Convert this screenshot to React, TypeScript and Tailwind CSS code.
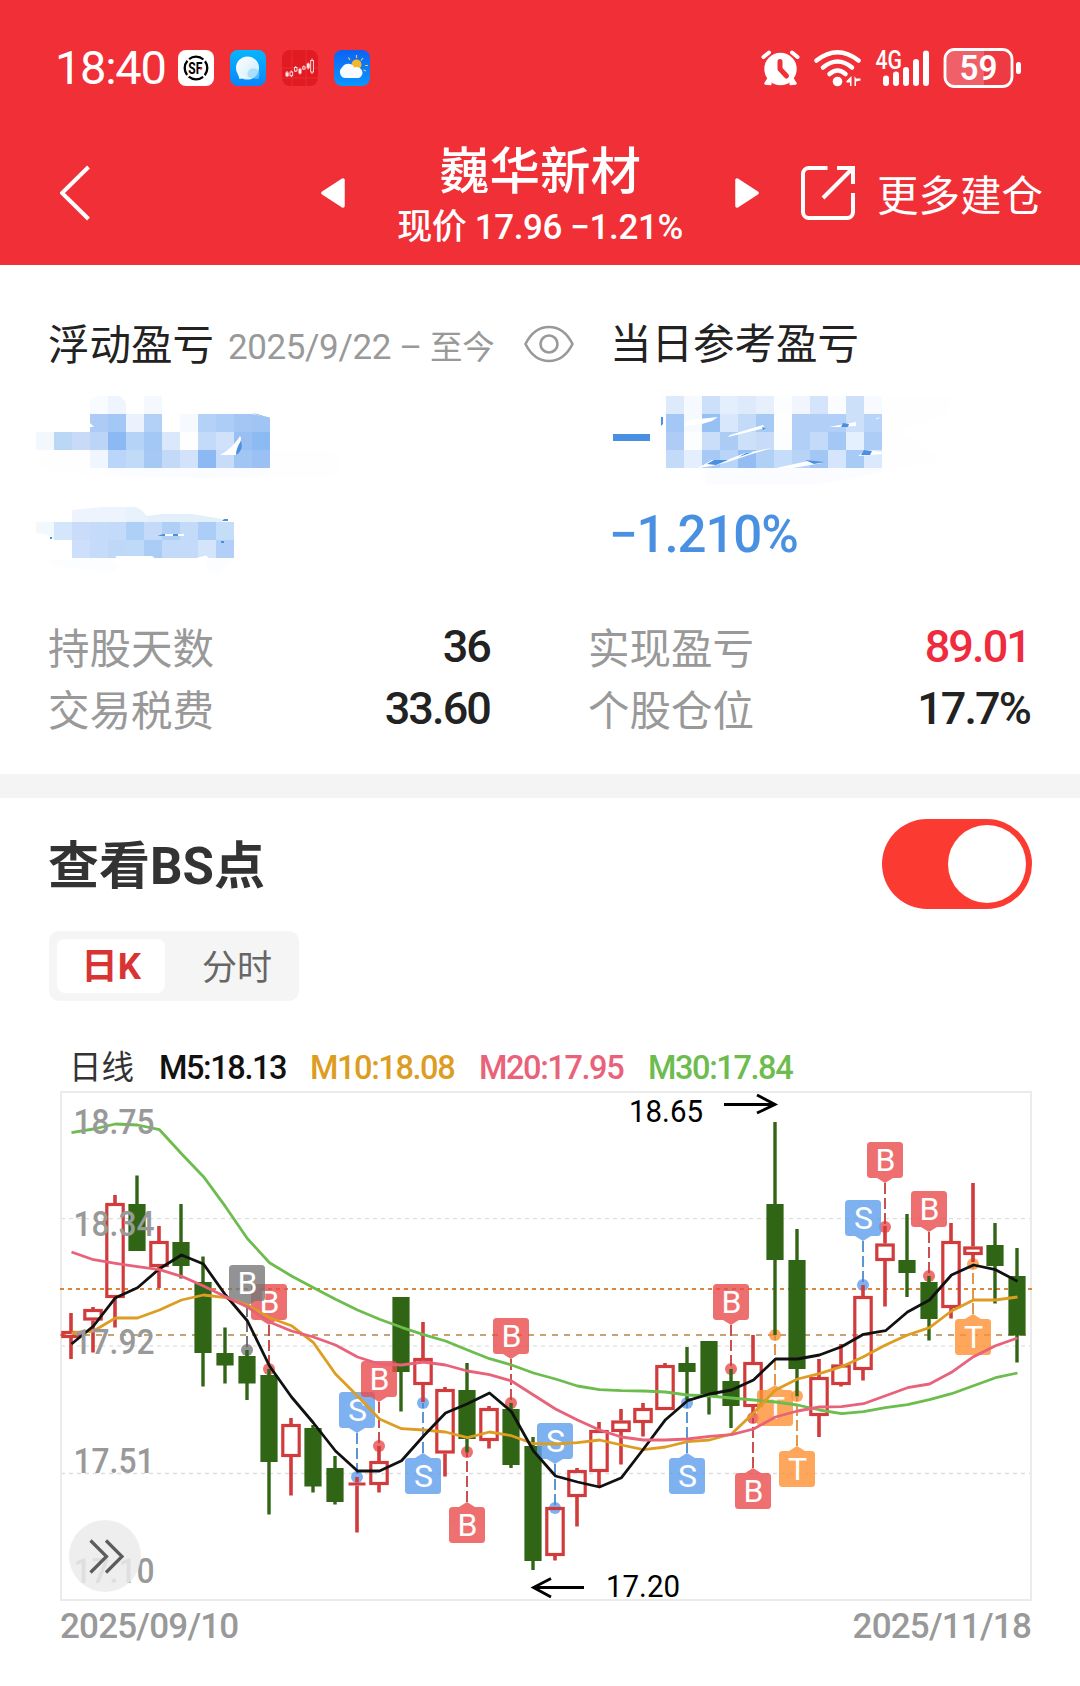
import { Fragment } from "react";

// [wick top, body top, body bottom, wick bottom, rising]
type Candle = [number, number, number, number, boolean];

const candles: Candle[] = [
  [1313, 1331, 1338, 1359, true],
  [1307, 1309, 1320.5, 1352.5, true],
  [1195, 1203, 1298, 1327.5, true],
  [1175.5, 1204, 1251, 1251, false],
  [1226, 1241, 1267, 1288, true],
  [1204, 1242, 1266, 1278.5, false],
  [1256.5, 1282, 1353, 1386.5, false],
  [1327.5, 1353, 1365.5, 1383.5, false],
  [1350, 1356, 1383.5, 1400, false],
  [1369, 1375, 1462, 1514.5, false],
  [1418, 1424, 1457, 1495.5, true],
  [1425, 1428, 1486.5, 1492.5, false],
  [1456, 1468, 1502, 1504.5, false],
  [1477, 1482.5, 1485.5, 1532.5, true],
  [1446, 1461, 1485, 1492.5, true],
  [1297, 1297, 1372, 1411.5, false],
  [1322, 1358, 1385, 1402, true],
  [1387, 1389, 1453.5, 1476.5, true],
  [1363, 1390, 1439, 1452.5, false],
  [1406, 1408, 1441, 1448.5, true],
  [1403, 1409, 1465, 1468, false],
  [1437, 1446, 1561, 1570, false],
  [1507, 1507, 1556, 1560.5, true],
  [1468, 1470, 1497, 1526.5, true],
  [1422, 1430, 1472, 1486, true],
  [1409, 1420.5, 1432, 1464.5, true],
  [1403, 1408, 1423, 1436.5, true],
  [1363, 1365, 1410, 1410, true],
  [1347, 1363, 1372, 1400, false],
  [1341, 1341, 1396, 1414.5, false],
  [1369, 1381, 1406, 1428, false],
  [1335, 1362, 1407, 1415, true],
  [1122, 1204, 1260, 1335, false],
  [1229, 1260, 1369, 1396.5, false],
  [1359, 1377, 1416, 1437, true],
  [1344, 1364.5, 1385, 1386.5, true],
  [1285, 1296, 1370, 1380.5, true],
  [1226, 1243.5, 1261, 1306.5, true],
  [1214, 1260, 1273, 1297, false],
  [1276, 1282, 1319, 1340.5, false],
  [1223, 1241, 1308, 1318.5, true],
  [1183, 1246.5, 1255, 1262, true],
  [1223, 1245, 1266, 1303.5, false],
  [1248, 1276, 1335.5, 1362.5, false],
];

const averages = [
  {
    label: "M30:17.84",
    color: "#6cbc4e",
    points: [1132.7, 1129, 1124, 1125, 1129.7, 1153.7, 1176.7, 1206.7, 1238.7, 1262.7, 1276, 1287.7, 1299.3, 1310, 1319.3, 1327.3, 1334.7, 1341, 1350, 1358.7, 1365, 1373, 1379, 1386, 1389.7, 1390.7, 1391, 1392, 1395, 1396, 1398, 1400, 1402, 1405, 1410, 1413.7, 1411.7, 1407.7, 1404.7, 1399.7, 1393.7, 1385.7, 1377.7, 1373],
  },
  {
    label: "M10:18.08",
    color: "#dd9d22",
    points: [1333, 1331, 1318, 1318, 1310, 1300, 1295, 1297.7, 1305, 1317.7, 1325.7, 1342.7, 1374, 1396, 1419, 1428.7, 1430, 1432, 1437.7, 1432, 1435.7, 1443.7, 1444, 1442.7, 1440, 1445, 1449.7, 1447, 1441.7, 1440, 1434, 1413, 1390, 1379, 1373.7, 1366.7, 1356.7, 1345, 1335, 1327.7, 1311, 1300, 1300, 1297],
  },
  {
    label: "M5:18.13",
    color: "#111111",
    points: [1344, 1326, 1297.7, 1287.7, 1268.7, 1255, 1264, 1295, 1321, 1366, 1397, 1423, 1451, 1471, 1471, 1460.7, 1436, 1413, 1403.7, 1393, 1411.7, 1451, 1476, 1482, 1487, 1477.7, 1449, 1419.7, 1400.7, 1394, 1390, 1380, 1359, 1359, 1355, 1346.7, 1334.3, 1330.7, 1312, 1300, 1275, 1265, 1269.7, 1281.3],
  },
  {
    label: "M20:17.95",
    color: "#e8627a",
    points: [1252, 1259.7, 1263.3, 1266.7, 1269.7, 1276.3, 1286, 1296.7, 1307, 1322, 1331, 1337, 1345, 1357, 1364, 1365, 1362, 1365, 1371, 1374.7, 1381, 1395, 1409, 1420, 1430, 1437, 1440, 1440, 1439, 1436.3, 1434.7, 1429, 1417, 1411, 1407, 1406.7, 1403.7, 1395.7, 1387.7, 1384, 1372.3, 1356.7, 1345.7, 1338],
  },
];

const tones = {
  red: { fill: "#ea4c4c", line: "#c83c3c" },
  blue: { fill: "#5f9eec", line: "#4a8ad0" },
  orange: { fill: "#fd9034", line: "#e08a3c" },
  gray: { fill: "#787878", line: "#666666" },
};

type Marker = {
  at: number;
  letter: string;
  tone: keyof typeof tones;
  top: number;
  dot: number;
};

const markers: Marker[] = [
  { at: 9, letter: "B", tone: "red", top: 1284, dot: 1369 },
  { at: 8, letter: "B", tone: "gray", top: 1265, dot: 1350 },
  { at: 13, letter: "S", tone: "blue", top: 1392, dot: 1477 },
  { at: 14, letter: "B", tone: "red", top: 1361, dot: 1446 },
  { at: 16, letter: "S", tone: "blue", top: 1458, dot: 1403 },
  { at: 18, letter: "B", tone: "red", top: 1507, dot: 1452 },
  { at: 20, letter: "B", tone: "red", top: 1318, dot: 1403 },
  { at: 22, letter: "S", tone: "blue", top: 1423, dot: 1508 },
  { at: 28, letter: "S", tone: "blue", top: 1458, dot: 1403 },
  { at: 30, letter: "B", tone: "red", top: 1284, dot: 1369 },
  { at: 31, letter: "B", tone: "red", top: 1473, dot: 1418 },
  { at: 32, letter: "T", tone: "orange", top: 1390, dot: 1335 },
  { at: 33, letter: "T", tone: "orange", top: 1451, dot: 1396 },
  { at: 36, letter: "S", tone: "blue", top: 1200, dot: 1285 },
  { at: 37, letter: "B", tone: "red", top: 1142, dot: 1227 },
  { at: 39, letter: "B", tone: "red", top: 1191, dot: 1276 },
  { at: 41, letter: "T", tone: "orange", top: 1319, dot: 1264 },
];

const priceLabels = [
  { text: "18.75", y: 1134 },
  { text: "18.34", y: 1236 },
  { text: "17.92", y: 1353.5 },
  { text: "17.51", y: 1473 },
  { text: "17.10", y: 1583 },
];

const xAt = (i: number) => 71 + i * 22;

function KLineChart() {
  return (
    <svg viewBox="0 1085 1080 520" className="block h-[520px] w-[1080px]">
      <g fill="none">
        <path d="M61 1218.7H1031M61 1473.5H1031" stroke="#dddddd" strokeWidth="1.3" strokeDasharray="4 4" />
        <path d="M61 1346H1031" stroke="#ebebeb" strokeWidth="2" strokeDasharray="4 4" />
        <rect x="61" y="1092" width="970" height="508" stroke="#ebebeb" strokeWidth="2" />
        <path d="M60 1289H1032" stroke="#d9863c" strokeWidth="2" strokeDasharray="4 4" />
        <path d="M60 1335H1032" stroke="#c8a272" strokeWidth="2" strokeDasharray="6 6" />
      </g>

      {markers.map((m) => (
        <circle key={m.at} cx={xAt(m.at)} cy={m.dot} r="6" fill={tones[m.tone].fill} opacity="0.8" />
      ))}

      {candles.map(([high, top, bottom, low, up], i) => {
        const x = xAt(i);
        if (!up) {
          return (
            <g key={i} fill="#2f6514">
              <rect x={x - 1.7} y={high} width="3.4" height={low - high} />
              <rect x={x - 8.6} y={top} width="17.2" height={bottom - top} />
            </g>
          );
        }
        const thin = bottom - top < 4;
        return (
          <g key={i} fill="#d13b3b">
            <rect x={x - 1.8} y={high} width="3.6" height={Math.max(0, top - high)} />
            <rect x={x - 1.8} y={bottom} width="3.6" height={Math.max(0, low - bottom)} />
            {thin ? (
              <rect x={x - 8.5} y={top} width="17" height={bottom - top} />
            ) : (
              <rect
                x={x - 8.2}
                y={top + 1.5}
                width="16.4"
                height={bottom - top - 3}
                fill="none"
                stroke="#d13b3b"
                strokeWidth="3.2"
              />
            )}
          </g>
        );
      })}

      {markers.map((m) => {
        const x = xAt(m.at);
        const above = m.top < m.dot;
        const edge = above ? m.top + 36 : m.top;
        const tip = above ? edge + 5 : edge - 5;
        const { fill, line } = tones[m.tone];
        return (
          <g key={m.at}>
            <path d={`M${x} ${tip}V${m.dot}`} stroke={line} strokeWidth="1.8" strokeDasharray="11 4" />
            <g opacity="0.8" fill={fill}>
              <rect x={x - 18} y={m.top} width="36" height="36" rx="3.5" />
              <path d={`M${x - 8} ${edge}H${x + 8}L${x} ${tip}Z`} />
            </g>
            <text x={x + 0.5} y={m.top + 29} textAnchor="middle" fontSize="32" fill="#ffffff">
              {m.letter}
            </text>
          </g>
        );
      })}

      {averages.map((line) => (
        <polyline
          key={line.label}
          points={line.points.map((y, i) => `${xAt(i) + 0.5},${y}`).join(" ")}
          fill="none"
          stroke={line.color}
          strokeWidth="2.8"
          strokeLinejoin="round"
        />
      ))}

      {priceLabels.map((label) => (
        <text
          key={label.text}
          x="73.5"
          y={label.y}
          fontSize="35"
          fontWeight="500"
          fill="#999999"
          textLength="81"
          lengthAdjust="spacingAndGlyphs"
        >
          {label.text}
        </text>
      ))}

      <g fill="none" stroke="#000000" strokeWidth="2.8">
        <path d="M724 1104.5H774M757 1095L775 1104.5L757 1113" />
        <path d="M584 1587.5H534M551 1578.5L533.5 1587.5L551 1597" />
      </g>
      <g fontSize="31" fill="#000000">
        <text x="629" y="1122" textLength="74" lengthAdjust="spacingAndGlyphs">18.65</text>
        <text x="606" y="1597" textLength="74" lengthAdjust="spacingAndGlyphs">17.20</text>
      </g>

      <circle cx="105" cy="1556" r="36" fill="#ebebeb" opacity="0.85" />
      <path d="M90.500 1540.500L106.500 1556.500L90.500 1572.500M106 1540.500L122 1556.500L106 1572.500" fill="none" stroke="#5c5c5c" strokeWidth="3.2" />
    </svg>
  );
}

function Cells({ x, y, rows }: { x: number; y: number; rows: string[] }) {
  return (
    <>
      {rows.map((row, r) => (
        <Fragment key={r}>
          {row.split(" ").map((hex, c) =>
            hex === "-" ? null : (
              <rect key={c} x={x + c * 18} y={y + r * 18} width="18" height="18" fill={`#${hex}`} shapeRendering="crispEdges" />
            )
          )}
        </Fragment>
      ))}
    </>
  );
}

function MaskedProfit() {
  return (
    <svg viewBox="0 380 565 200" className="block h-[200px] w-[565px]">
      <path d="M110 478C90 476 60 472 40 468L38 450H330C343 452 344 474 328 478Z" fill="#fefeff" />
      <path d="M110 468H270V474C230 480 160 478 110 474Z" fill="#fafcff" />
      <Cells
        x={36}
        y={396}
        rows={[
          "- - - f8fbff eef5fe - f5f9ff - - - - - -",
          "- - - adcbf5 a4c8f5 ebf2fd b3d1f7 - f6f9fe b4d1f7 aecdf6 a4c6f4 a0c5f4",
          "f2f8fe bbd7f6 c8daf8 bad5f7 8cb9f3 b5d2f7 a4c8f5 d9e8fb fefeff c3dbf9 d0e1fb 9ac0f3 8cbaf3",
          "- - - f0f6fe bad5fa c0daf8 a5c8f5 c3d9f8 d2e2fb 8cb8f3 c8dcf9 a2c6f4 9ac0f4",
        ]}
      />
      <path d="M90 396H96L90 400ZM120 396H126V402ZM252 414H270V417.500Z" fill="#ffffff" />
      <path d="M252 413L257 414L270 418L258 415Z" fill="#6ea5e2" />
      <path d="M90 423L94 427H90Z" fill="#ffffff" />
      <path d="M220 455C228 451 236 443 240 436L241 438C241 443 237 447 236 455Z" fill="#ffffff" />
      <path d="M241 441C243 447 241 452 236 455C236 450 238 445 241 441Z" fill="#4a90e2" />

      <path d="M50 560L110 558L118 566C118 574 108 575 96 571L52 566ZM206 558H234L222 572C214 578 206 572 206 566Z" fill="#fcfdff" />
      <path d="M72 518C85 515 94 516 102 514H137C142 516 144 522 147 523C158 519 178 521 190 521C202 523 218 526 230 523V524H72Z" fill="#ebf3fd" />
      <Cells
        x={36}
        y={522}
        rows={[
          "f2f9fe d4e6fb c9ddfa c4dbf9 c3daf8 aecff6 c5daf8 b0cff6 c3dbf9 abcdf7 c4ddf8",
          "- - cddffa c4dbf9 c0d8f8 bfd9f8 a9cdf5 c3dbf9 c3dbf9 d4e5fb b2cff7",
        ]}
      />
      <path d="M72 510L102 507H126V522H72Z" fill="#edf4fd" />
      <path d="M126 507H135C141 508 144 513 147 516V522H126Z" fill="#e8f2fd" />
      <path d="M147 516L162 514H192L222 519V522H147Z" fill="#e4effc" />
      <path d="M36 533L48 535L54 540H36Z" fill="#ffffff" />
      <path d="M115 556H152L156 559H118ZM196 558L206 555.500L210 559Z" fill="#ffffff" />
      <path d="M156 536L164 534H184V536Z" fill="#ffffff" />
      <path d="M157 536L163 534H165V536ZM173 534H178V536H173ZM50 537H52V539H50ZM224 519H228V521H222ZM221 541H224V543H221Z" fill="#4f8fd2" />
    </svg>
  );
}

function MaskedDayProfit() {
  return (
    <svg viewBox="565 380 515 110" className="block h-[110px] w-[515px]">
      <path d="M645 385L700 396H950V412L900 432L945 460L820 485H705L700 468H660V396Z" fill="#fefeff" />
      <path d="M704 468H882V472L820 484H706Z" fill="#fafcff" />
      <rect x="613" y="434" width="37" height="7" fill="#4a90e2" />
      <Cells
        x={666}
        y={396}
        rows={[
          "dceafc f6f9fe cde0fa e4effd dceafc e6f0fd fcfdff f1f6fe d4e5fb fafcff cde0fa f7fafe",
          "a4c8f5 f6f9fe 97c0f4 d8e7fc c3daf8 a6c9f5 fefeff b2d0f7 b2d0f7 b2d0f7 cde0fa b8d4f8",
          "aeccf5 fbfdff cadefa acccf6 cde0fa c8dcfa fbfdff b2cff7 c3daf9 a4c8f5 e4f0fd aecdf6",
          "c3daf9 e4effd a8c9f6 b8d4f8 93bdf3 b0d0f6 c5dcfa b8d3f8 a3c7f4 d5e6fc a8caf6 dbe9fc",
        ]}
      />
      <g fill="#ffffff">
        <path d="M684 426L689 420L718 417L712 421L702 424Z" />
        <path d="M728 437L730 435L763 425L765 428Z" />
        <path d="M698 468L712 460L727 460L745 453L772 448L752 454L728 462L712 466Z" />
        <path d="M776 468L808 461L822 463L793 468Z" />
        <path d="M829 427L856 422V426L840 427Z" />
        <path d="M858 456L866 450L882 452V454L872 455Z" />
        <path d="M875 419L880 417L878 419Z" />
      </g>
      <g fill="#4a90e2">
        <path d="M661 417H663V424L661 426Z" />
        <path d="M707 464L714 460L728 460L716 465Z" />
        <path d="M739 457L746 453L753 452L742 456Z" />
        <path d="M805 460L824 462L814 464Z" />
        <path d="M841 427L843 423L849 424L848 427Z" />
        <path d="M861 455L864 450L872 451L870 455Z" />
        <path d="M762 427L766 428L763 430Z" />
      </g>
    </svg>
  );
}

function AppIcons() {
  return (
    <svg viewBox="0 0 192 36" className="ml-[14px] h-9 w-48">
      <defs>
        <linearGradient id="chat" x2="0" y2="1">
          <stop stopColor="#06b6fd" />
          <stop offset="1" stopColor="#0a84fb" />
        </linearGradient>
        <linearGradient id="sky" x2="0" y2="1">
          <stop stopColor="#0b63f4" />
          <stop offset="1" stopColor="#0a96ff" />
        </linearGradient>
        <linearGradient id="bubble" x2="1" y2="1">
          <stop stopColor="#ffffff" />
          <stop offset="1" stopColor="#c9ebfd" />
        </linearGradient>
      </defs>
      <rect width="36" height="36" rx="8" fill="#ffffff" />
      <circle cx="18" cy="18" r="11.300" fill="none" stroke="#000000" strokeWidth="2.300" strokeDasharray="15.500 2.250" strokeDashoffset="-10" />
      <text x="17.300" y="23.700" textAnchor="middle" fontSize="16.500" fontWeight="700" textLength="14" lengthAdjust="spacingAndGlyphs">SF</text>
      <circle cx="23" cy="18.500" r="1.200" fill="#e02020" />

      <rect x="52" width="36" height="36" rx="8" fill="url(#chat)" />
      <circle cx="69.500" cy="18" r="11.500" fill="url(#bubble)" />
      <path d="M59.500 22L61.500 29L69 27.500Z" fill="#eef9ff" />
      <path d="M75 18.500C80 18.500 81.500 21 81.500 24L80.500 29L76 28.500C71 28 69 26 69.500 24C70 20 72 18.500 75 18.500Z" fill="#8ed2fb" opacity="0.6" />

      <rect x="104" width="36" height="36" rx="8" fill="#e21b22" />
      <path d="M114 0V36M128 0V36M104 18H140M104 28H140" stroke="#ec3b3f" strokeWidth="0.600" />
      <g fill="#ffe9e9">
        <rect x="107.500" y="22.500" width="3.200" height="3.700" />
        <rect x="120.500" y="19" width="3" height="4.500" />
        <rect x="128.700" y="13.500" width="3" height="4.700" />
      </g>
      <g fill="none" stroke="#ffe9e9" strokeWidth="0.900">
        <path d="M109 21V27M113.300 20.500V27M117.700 16V22M122 18V24.500M125.800 15.500V20M130.200 12.500V19.500M134 8.500V24" />
        <rect x="112" y="22" width="2.700" height="3.700" fill="#e21b22" />
        <rect x="116.500" y="17.500" width="2.500" height="3.500" fill="#e21b22" />
        <rect x="124.700" y="16.800" width="2.400" height="2.200" fill="#e21b22" />
        <rect x="132.700" y="10.500" width="2.700" height="11.500" fill="#e21b22" />
      </g>

      <rect x="156" width="36" height="36" rx="8" fill="url(#sky)" />
      <path d="M178.500 5V8M170.500 7.500L172 10M185 8L183 10.500M187 15.500H190M185.500 20L188 21" stroke="#f7c64a" strokeWidth="1.200" />
      <circle cx="178.500" cy="14.500" r="5" fill="#f6b62c" />
      <path d="M167.500 28A6 6 0 0 1 164 17.500A7 7 0 0 1 176.500 17.500A5.500 5.500 0 0 1 181 28Z" fill="#f7fbff" />
    </svg>
  );
}

function SystemIcons() {
  return (
    <svg viewBox="760 46 264 42" className="ml-auto mr-14 h-[42px] w-[264px]">
      <g fill="#ffffff">
        <circle cx="780.500" cy="68" r="16.200" />
        <path d="M769 77L765.500 82.500L770.500 83ZM792 77L795.500 82.500L790.500 83Z" stroke="#ffffff" strokeWidth="2.500" strokeLinejoin="round" />
      </g>
      <path d="M763.500 56L769 51.500M797.500 56L792 51.500" stroke="#ffffff" strokeWidth="4" strokeLinecap="round" />
      <path d="M780 60.500V68L786.500 75" fill="none" stroke="#f12f37" strokeWidth="5" strokeLinecap="round" strokeLinejoin="round" />

      <g fill="none" stroke="#ffffff" strokeWidth="4.500" strokeLinecap="round">
        <path d="M816.500 59.500Q837.500 43 858.500 59.500" />
        <path d="M823 66.500Q837.500 54.500 852 66.500" />
        <path d="M829.500 73Q837.500 66 845.500 73" />
      </g>
      <circle cx="837.500" cy="80.500" r="4.800" fill="#ffffff" />
      <path d="M851.500 75V85H850V81.500H846.500V80ZM854.500 75V85H856V80.500L860.500 79.500V77.500H856Z" fill="#ffffff" />

      <text x="875.500" y="67.500" fontSize="25" fontWeight="500" fill="#ffffff" textLength="26.500" lengthAdjust="spacingAndGlyphs">4G</text>
      <path d="M886 77.500V82M896 73.500V82M906 69V82M916 61V82M926 52.500V82" stroke="#ffffff" strokeWidth="6" strokeLinecap="round" />

      <rect x="945" y="48.500" width="67" height="37" rx="9.500" fill="#ee3a42" />
      <path d="M984 48.500H954.500A9.500 9.500 0 0 0 945 58V76A9.500 9.500 0 0 0 954.500 85.500H984Z" fill="#f06068" />
      <rect x="945" y="48.500" width="67" height="37" rx="9.500" fill="none" stroke="#ffffff" strokeWidth="2.800" />
      <rect x="1016" y="61" width="5" height="12" rx="2.300" fill="#ffffff" />
      <text x="978.500" y="79" textAnchor="middle" fontSize="34.500" fontWeight="600" fill="#ffffff" textLength="38" lengthAdjust="spacingAndGlyphs">59</text>
    </svg>
  );
}

function Header() {
  return (
    <header className="h-[265px] bg-[#f12f37] text-white">
      <div className="flex h-[136px] items-center pl-[55px]">
        <span className="w-[109px] whitespace-nowrap pb-0.5 text-[47px] leading-none tracking-[-1.3px]">18:40</span>
        <AppIcons />
        <SystemIcons />
      </div>
      <div className="flex h-[114px] items-center pl-[60px]">
        <svg viewBox="0 0 30 56" className="h-14 w-[30px]">
          <path d="M28.500 2L2 28L28.500 54" fill="none" stroke="#ffffff" strokeWidth="4" />
        </svg>
        <svg viewBox="0 0 24 30" className="ml-[231px] h-[30px] w-6">
          <path d="M22 2V28L2 15Z" fill="#ffffff" stroke="#ffffff" strokeWidth="3.500" strokeLinejoin="round" />
        </svg>
        <div className="flex w-[390px] flex-col items-center pt-[14px]">
          <h1 className="text-[50.500px] font-medium leading-[56px]">巍华新材</h1>
          <p className="whitespace-pre text-[35px] font-medium leading-[56px] tracking-[-0.400px]">现价 17.96 −1.21%</p>
        </div>
        <svg viewBox="0 0 24 30" className="h-[30px] w-6">
          <path d="M2 2V28L22 15Z" fill="#ffffff" stroke="#ffffff" strokeWidth="3.500" strokeLinejoin="round" />
        </svg>
        <svg viewBox="0 0 54 54" className="ml-[42px] h-[54px] w-[54px]" fill="none" stroke="#ffffff" strokeWidth="4">
          <path d="M26.500 2H8A6 6 0 0 0 2 8V46A6 6 0 0 0 8 52H46A6 6 0 0 0 52 46V27" />
          <path d="M36 2H52V18M51 3L22 32" />
        </svg>
        <span className="ml-[22px] whitespace-nowrap pt-[7px] text-[41.500px] leading-none">更多建仓</span>
      </div>
    </header>
  );
}

const stats = [
  { label: "持股天数", value: "36", color: "text-[#222222]" },
  { label: "实现盈亏", value: "89.01", color: "text-[#ef2b3e]" },
  { label: "交易税费", value: "33.60", color: "text-[#222222]" },
  { label: "个股仓位", value: "17.7%", color: "text-[#222222]" },
];

function Summary() {
  return (
    <section className="h-[509px]">
      <div className="flex">
        <div className="w-[565px]">
          <div className="flex h-[115px] items-center whitespace-nowrap pl-12 pt-[42px]">
            <span className="w-[180px] shrink-0 pt-1 text-[41.500px] leading-none text-[#222222]">浮动盈亏</span>
            <span className="w-[296px] shrink-0 whitespace-pre pt-[7px] text-[35px] leading-none tracking-[-0.400px] text-[#999999]">
              2025/9/22 – <span className="text-[32.500px]">至今</span>
            </span>
            <svg viewBox="0 0 50 38" className="h-[38px] w-[50px] shrink-0" fill="none" stroke="#999999" strokeWidth="2.600">
              <path d="M1.500 19C7 8 15 2 25 2S43 8 48.500 19C43 30 35 36 25 36S7 30 1.500 19Z" />
              <circle cx="25" cy="19" r="8.500" />
            </svg>
          </div>
          <MaskedProfit />
        </div>
        <div className="w-[515px]">
          <div className="flex h-[115px] items-center pl-[45px] pt-[42px]">
            <span className="pt-[3px] text-[41.500px] leading-none text-[#222222]">当日参考盈亏</span>
          </div>
          <MaskedDayProfit />
          <div className="flex h-[88px] items-center pl-[44px]">
            <span className="text-[51px] font-medium leading-none tracking-[-1.100px] text-[#4a90e2]">−1.210%</span>
          </div>
        </div>
      </div>
      <div className="mt-9 grid grid-cols-[442px_442px] gap-x-[98px] pl-12">
        {stats.map((item) => (
          <div key={item.label} className="flex h-[62.500px] items-center justify-between">
            <span className="pt-1 text-[41.500px] leading-none text-[#999999]">{item.label}</span>
            <span className={`pb-0.5 text-[45px] font-medium leading-none tracking-[-1.900px] ${item.color}`}>{item.value}</span>
          </div>
        ))}
      </div>
    </section>
  );
}

export default function App() {
  return (
    <main className="h-[1686px] w-[1080px] overflow-hidden bg-white font-[Roboto,'Noto_Sans_CJK_SC',sans-serif]">
      <Header />
      <Summary />
      <div className="h-6 bg-[#f4f4f4]" />

      <div className="flex h-[133px] items-center justify-between pb-0.5 pl-12 pr-12">
        <h2 className="pt-1.5 text-[51px] font-bold leading-none text-[#333333]">查看BS点</h2>
        <button className="flex h-[90px] w-[150px] items-center justify-end rounded-full bg-[#fb3b31] p-1.5">
          <span className="h-[78px] w-[78px] rounded-full bg-white" />
        </button>
      </div>

      <div className="ml-[49px] flex h-[70px] w-[250px] items-center rounded-[10px] bg-[#f5f5f5] p-2">
        <div className="flex h-[54px] w-[108px] items-center justify-center rounded-lg bg-white pt-[3px] text-[36.500px] font-bold leading-none text-[#d93434]">
          日K
        </div>
        <div className="flex flex-1 items-center justify-center pl-[18px] pt-1 text-[35px] leading-none text-[#666666]">分时</div>
      </div>

      <div className="flex h-[84px] items-end whitespace-nowrap pl-[69px] text-[32.500px] font-medium leading-[34px]">
        <span className="w-[90px] font-normal text-[#333333]">日线</span>
        <span className="w-[151px] tracking-[-1.400px] text-[#111111]">M5:18.13</span>
        <span className="w-[169px] tracking-[-1.400px] text-[#dd9d22]">M10:18.08</span>
        <span className="w-[169px] tracking-[-1.400px] text-[#e8627a]">M20:17.95</span>
        <span className="tracking-[-1.400px] text-[#6cbc4e]">M30:17.84</span>
      </div>

      <KLineChart />

      <div className="flex h-[42px] items-center justify-between pl-[60px] pr-[49px] text-[35px] font-medium leading-none tracking-[-0.800px] text-[#999999]">
        <span>2025/09/10</span>
        <span>2025/11/18</span>
      </div>
    </main>
  );
}
